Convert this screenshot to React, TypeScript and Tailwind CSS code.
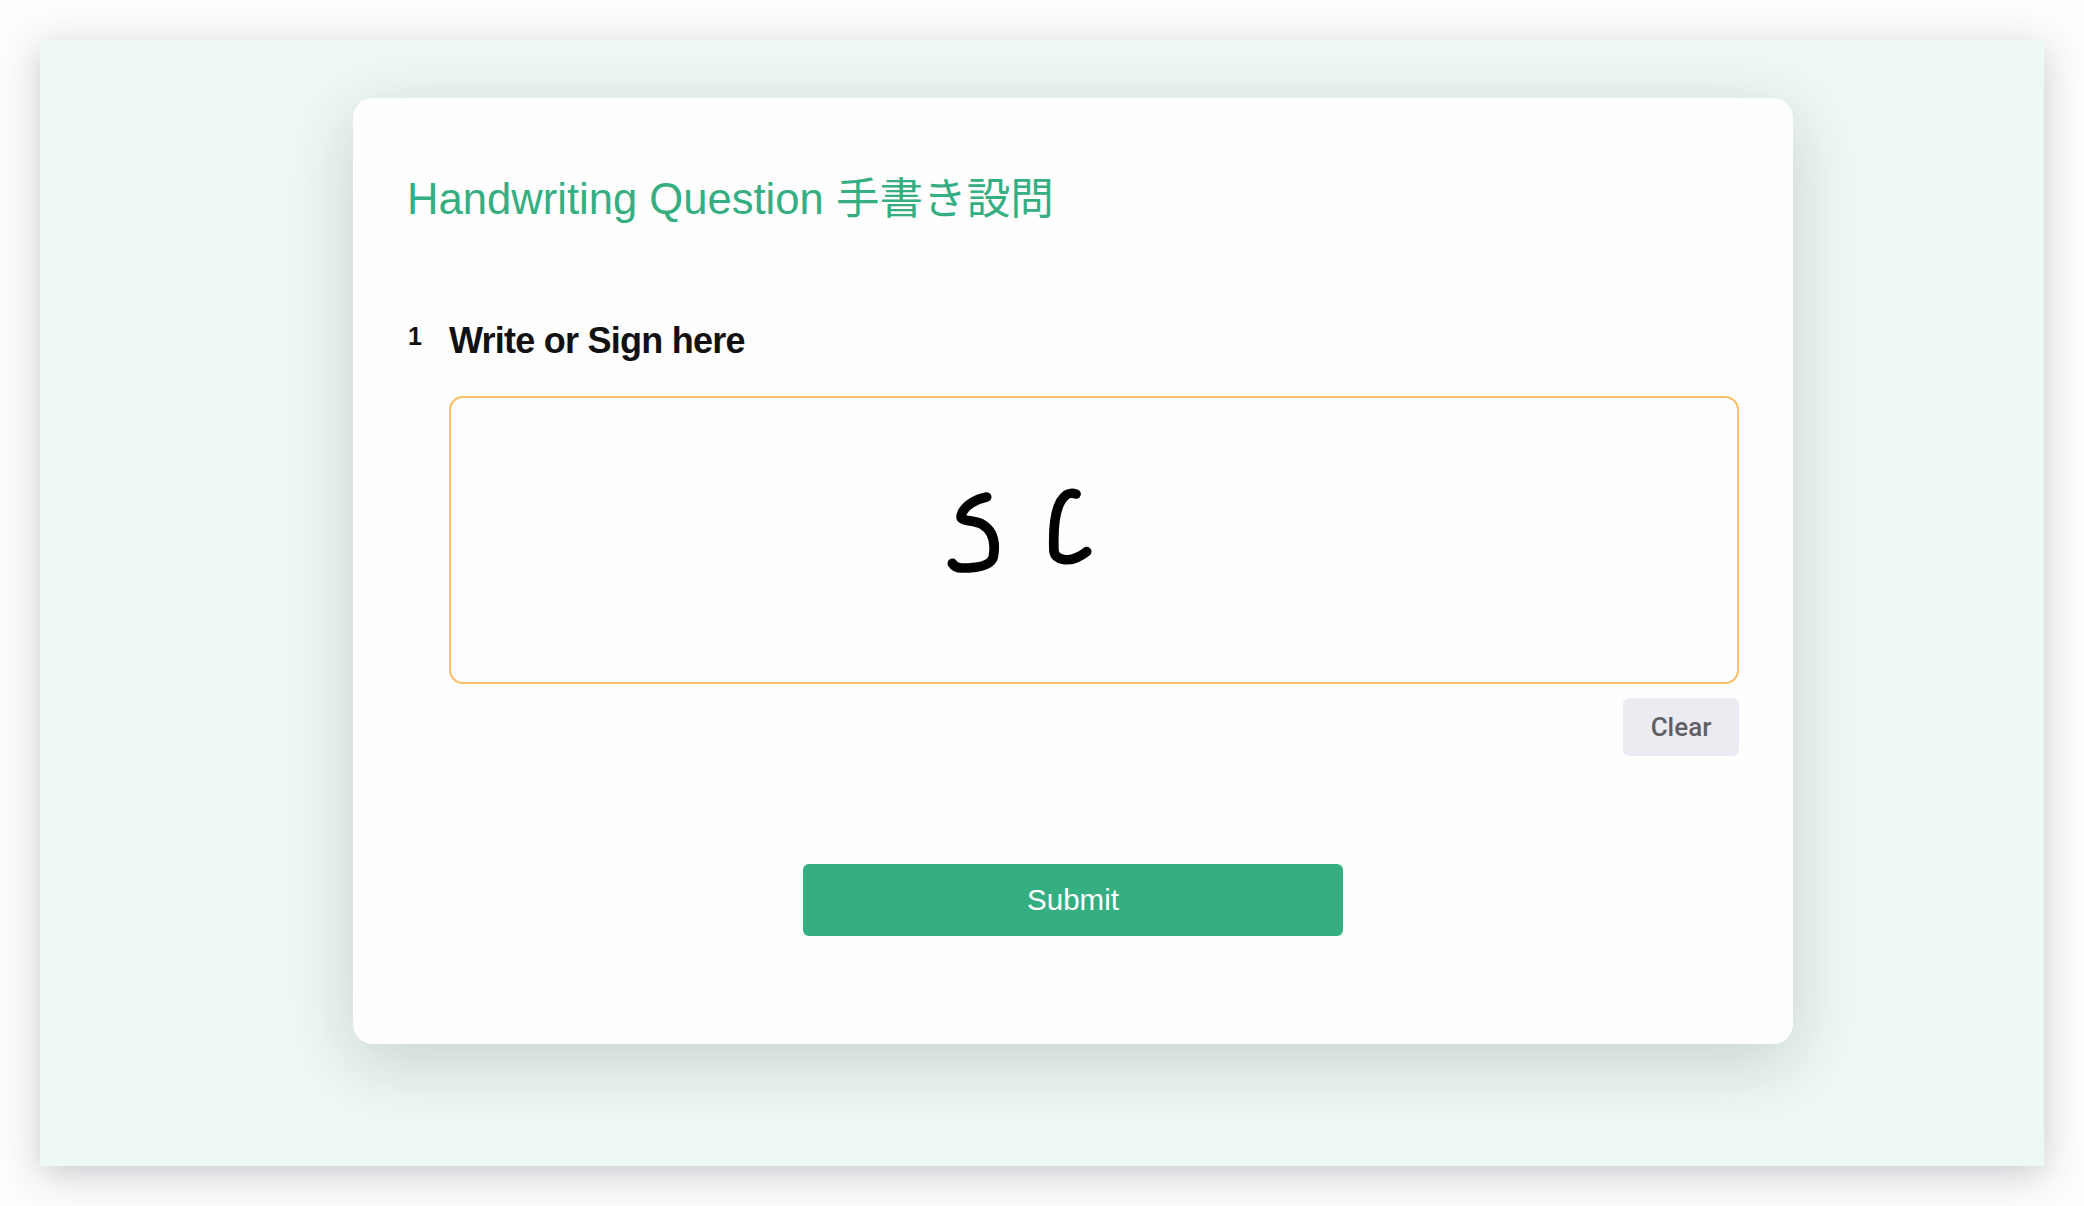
import React from 'react';

const sans = 'font-["Liberation_Sans","Noto_Sans_CJK_JP",sans-serif]';

const Handwriting = () => (
  <svg width="220" height="130" viewBox="0 0 660 390" fill="none" className="blur-[0.4px]">
    <path
      d="M260 111 C225 118 192 138 184 165 C178 186 215 178 245 192 C280 212 288 245 280 290 C273 322 215 324 185 324 C170 324 162 318 157 310"
      stroke="#000"
      strokeWidth="29"
      strokeLinecap="round"
      strokeLinejoin="round"
    />
    <path
      d="M528 102 C510 96 497 100 482 124 C460 162 460 230 462 275 C467 303 510 303 530 293 C545 286 553 281 560 275"
      stroke="#000"
      strokeWidth="29"
      strokeLinecap="round"
      strokeLinejoin="round"
    />
  </svg>
);

export default function App() {
  return (
    <div className={`w-[2084px] h-[1206px] overflow-hidden bg-[#fefdfe] p-10 ${sans}`}>
      <div className="w-[2004px] h-[1126px] bg-[#eef8f4] pt-[58px] pl-[313px] shadow-[0_8px_36px_rgba(40,30,50,0.24)]">
        <div className="w-[1440px] h-[946px] bg-[#fefefe] rounded-[20px] shadow-[0_18px_70px_rgba(40,60,55,0.2)] pt-[73px] pl-[54px]">
          <h1 className="text-[43.6px] leading-[56px] font-normal text-[#35ae82]">Handwriting Question 手書き設問</h1>

          <div className="flex mt-[89px] items-start h-[80px]">
            <span className="w-[42px] pl-[1px] text-[25px] leading-[40px] font-bold text-[#111]">1</span>
            <span className="text-[36px] leading-[50px] font-bold tracking-[-0.75px] text-[#111]">Write or Sign here</span>
          </div>

          <div className="ml-[42px] w-[1290px]">
            <div className="h-[288px] border-2 border-[#f9bd62] rounded-[14px] pt-[62px] pl-[449px]">
              <Handwriting />
            </div>
            <div className="flex justify-end mt-[14px]">
              <button className="w-[116px] h-[58px] rounded-[6px] bg-[#ecebf2] text-[#606066] text-[26px] font-medium font-['Roboto',sans-serif]">
                Clear
              </button>
            </div>
          </div>

          <div className="flex mt-[108px] pl-[450px] -ml-[54px]">
            <button className="w-[540px] h-[72px] rounded-[6px] bg-[#35ae82] text-white text-[29.5px]">Submit</button>
          </div>
        </div>
      </div>
    </div>
  );
}
